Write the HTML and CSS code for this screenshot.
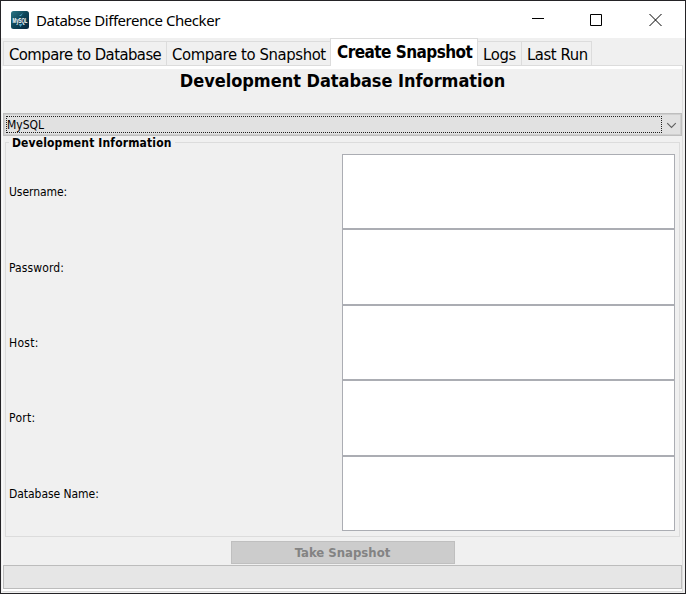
FILE: index.html
```
<!DOCTYPE html>
<html lang="en">
<head>
<meta charset="utf-8">
<title>Databse Difference Checker</title>
<link rel="stylesheet" href="styles.css">
</head>
<body>
<div class="window">
  <header class="titlebar">
    <svg class="logo" viewBox="0 0 18 18">
      <defs><linearGradient id="g" x2="1" y2="1"><stop stop-color="#2b7785"/><stop offset=".5" stop-color="#0c4458"/><stop offset="1" stop-color="#06243c"/></linearGradient></defs>
      <rect width="18" height="18" rx="2.5" fill="url(#g)"/>
      <path d="M8 5l4-3-2 3zM7.500 13l4 0-2 3z" fill="#4a9dc0"/>
      <text x="1.5" y="12" textLength="15" lengthAdjust="spacingAndGlyphs">MySQL</text>
    </svg>
    <h1><span>Databse Difference Checker</span></h1>
    <svg class="controls" viewBox="0 0 132 14" fill="none" stroke="#000">
      <path d="M1 5.500h12M59.500 1.500h11v11h-11zM118.500 1l12 12M130.500 1l-12 12"/>
    </svg>
  </header>
  <nav class="tabs">
    <button class="tab database"><span>Compare to Database</span></button>
    <button class="tab snapshot"><span>Compare to Snapshot</span></button>
    <button class="tab active"><span>Create Snapshot</span></button>
    <button class="tab logs"><span>Logs</span></button>
    <button class="tab last"><span>Last Run</span></button>
  </nav>
  <main class="panel">
    <h2><span>Development Database Information</span></h2>
    <div class="combo">
      <div class="value"><span>MySQL</span></div>
      <svg viewBox="0 0 20 21" fill="none" stroke="#606060" stroke-width="1.2"><path d="M5.500 9l4.500 4.500L14.500 9"/></svg>
    </div>
    <section class="group">
      <h3>Development Information</h3>
      <div class="row"><label for="f1" class="user">Username:</label><input id="f1"></div>
      <div class="row"><label for="f2" class="pass">Password:</label><input id="f2"></div>
      <div class="row"><label for="f3" class="host">Host:</label><input id="f3"></div>
      <div class="row"><label for="f4" class="port">Port:</label><input id="f4"></div>
      <div class="row"><label for="f5" class="name">Database Name:</label><input id="f5"></div>
    </section>
    <button class="take" disabled><span>Take Snapshot</span></button>
    <div class="progress"></div>
  </main>
</div>
</body>
</html>
```
FILE: styles.css
```
* { box-sizing: border-box; }
body { margin: 0; font-family: "DejaVu Sans Condensed", "DejaVu Sans", sans-serif; font-stretch: condensed; color: #000; }
h1, h2, h3 { margin: 0; }
button { padding: 0; font: inherit; color: inherit; }
span, label { white-space: nowrap; }
.window { width: 686px; height: 594px; border: 1px solid #242326; background: #f0f0f0; display: flex; flex-direction: column; }
.titlebar { height: 37px; background: #fff; display: flex; align-items: center; padding: 0 22px 0 10px; flex: none; }
.logo { width: 18px; height: 18px; overflow: visible; }
.logo text { font: bold 7px "Liberation Sans", sans-serif; fill: #fff; }
.titlebar h1 { flex: 1; margin-left: 7px; font: 15px "Noto Sans", sans-serif; letter-spacing: -0.46px; }
.controls { width: 132px; height: 14px; }
.tabs { display: flex; align-items: flex-end; height: 27px; padding-left: 2px; flex: none; position: relative; z-index: 1; }
.tab { height: 24px; border: 1px solid #dcdcdc; border-bottom: 0; border-right: 0; background: #f0f0f0; font-size: 16.5px; line-height: 25px; text-align: left; padding-left: 5px; letter-spacing: -0.3px; }
.database { width: 163px; letter-spacing: -0.54px; }
.snapshot { width: 164px; letter-spacing: -0.38px; }
.active { width: 148px; height: 28px; margin-bottom: -1px; background: #fff; font-size: 17px; font-weight: bold; line-height: 25px; padding-left: 6px; border-right: 1px solid #dcdcdc; letter-spacing: -0.54px; }
.logs { width: 43px; border-left: 0; }
.last { width: 71px; border-right: 1px solid #dcdcdc; letter-spacing: -0.42px; }
.panel { flex: 1; margin: 0 2px 1px 1px; border: 1px solid #dcdcdc; border-left-color: #fafafa; box-shadow: inset 0 3px #fff, inset 0 -2px #fff; display: flex; flex-direction: column; }
.panel h2 { height: 47px; font-size: 18px; line-height: 29px; text-align: center; letter-spacing: -0.03px; flex: none; }
.combo { height: 23px; border: 1px solid #bebebe; background: #e1e1e1; display: flex; padding: 2px 0 2px 2px; flex: none; box-shadow: inset 0 0 0 1px #cfcfcf; }
.value { flex: 1; border: 1px dotted #202020; font-size: 12px; line-height: 17px; letter-spacing: 0; }
.combo svg { width: 19px; height: 21px; margin-top: -2px; }
.group { height: 395px; margin: 6px 2px 0; border: 1px solid #dcdcdc; display: flex; flex-direction: column; padding: 0 4px 5px 3px; flex: none; }
.group h3 { height: 12px; align-self: flex-start; background: #f0f0f0; font-size: 12px; line-height: 12px; margin-top: -6px; margin-bottom: 5px; padding: 0 3px; letter-spacing: 0.14px; }
.row { flex: 1; display: flex; align-items: center; min-height: 0; }
.row label { width: 333px; font-size: 12px; letter-spacing: -0.05px; padding-top: 1px; }
.row .pass { letter-spacing: 0.12px; }
.row .host, .row .port { letter-spacing: 0.3px; }
.row input { flex: 1; height: 100%; border: 1px solid #abadb3; background: #fff; margin: 0; padding: 2px; min-width: 0; }
.take { width: 224px; height: 23px; margin: 4px 0 1px; align-self: center; border: 1px solid #bfbfbf; background: #ccc; color: #838383; font-size: 13px; font-weight: bold; line-height: 21px; flex: none; }
.progress { height: 24px; border: 1px solid #bcbcbc; background: #e6e6e6; flex: none; }
```
